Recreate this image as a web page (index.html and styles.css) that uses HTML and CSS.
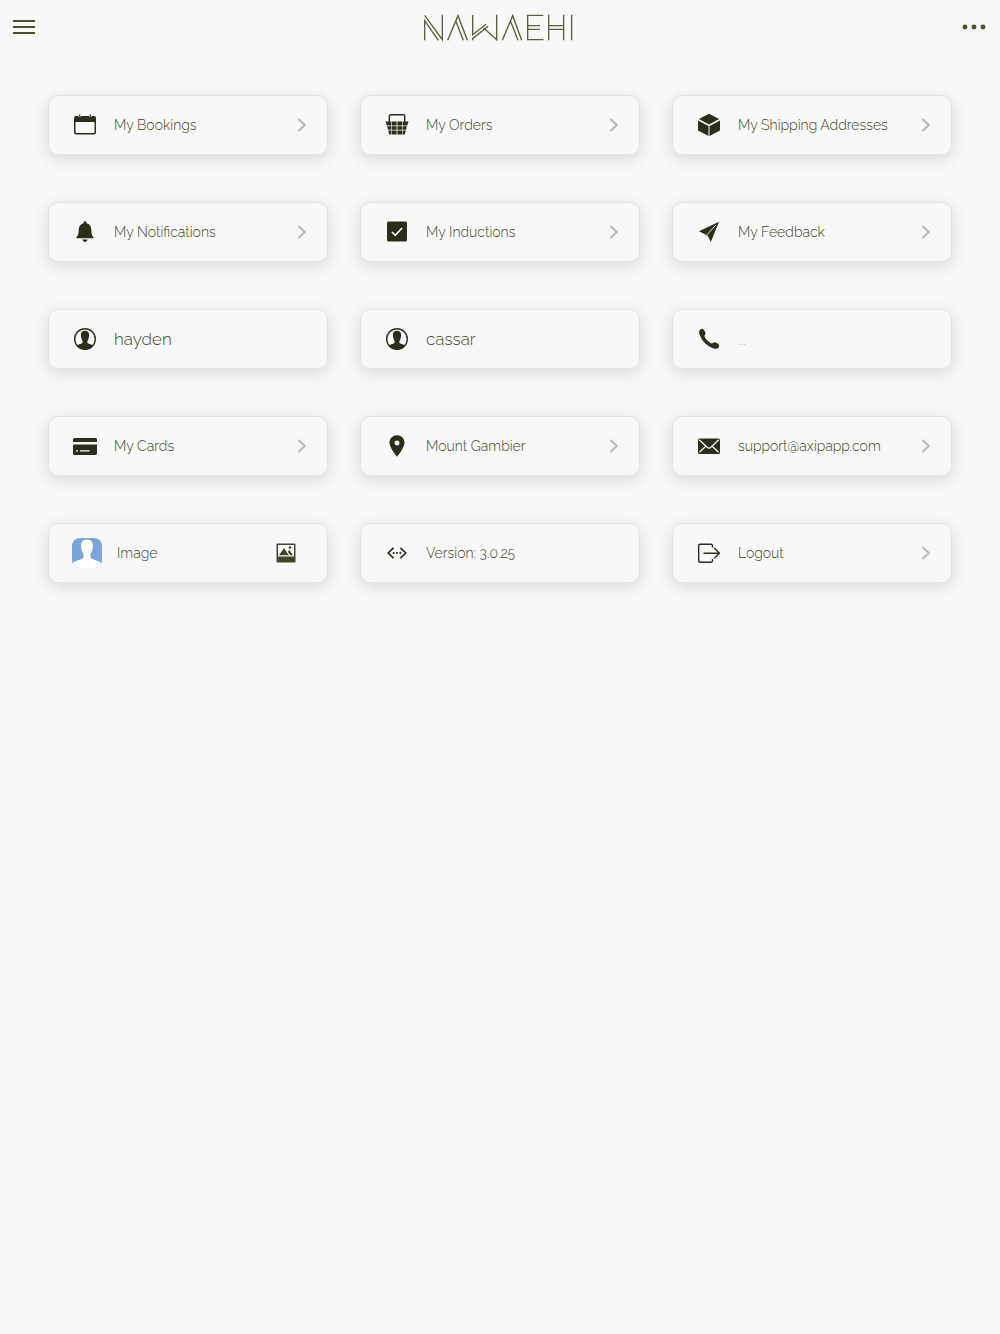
FILE: index.html
```html
<!DOCTYPE html>
<html lang="en">
<head>
  <meta charset="UTF-8">
  <meta name="viewport" content="width=device-width, initial-scale=1">
  <title>Nawaehi - My Account</title>
  <link rel="stylesheet" href="styles.css">
</head>
<body>
  <!-- shared icons -->
  <svg class="defs" aria-hidden="true">
    <symbol id="chevron" viewBox="0 0 10 16">
      <path d="M2 2.500l5.800 5.500L2 13.500" fill="none" stroke="#b9b9b9" stroke-width="2" stroke-linecap="round" stroke-linejoin="round"/>
    </symbol>
    <symbol id="person" viewBox="0 0 24 24">
      <circle cx="12" cy="12" r="10.300" fill="none" stroke="#2b2f1a" stroke-width="1.400"/>
      <path d="M12 3.800c-2.800 0-4.300 1.800-4.100 4.300.1 1.800.5 4.200 1.500 5.700.5.800.3 2-.2 2.500-1.200 1-3.900 1.100-5.200 2.300A10.400 10.400 0 0 0 12 22.500a10.400 10.400 0 0 0 8-3.900c-1.300-1.200-4-1.300-5.200-2.300-.5-.5-.7-1.700-.2-2.500 1-1.500 1.400-3.900 1.500-5.700.2-2.500-1.300-4.300-4.100-4.300z"/>
    </symbol>
  </svg>

  <header>
    <button class="icon-btn" aria-label="Menu">
      <svg width="24" height="24" viewBox="0 0 24 24"><path d="M1 6h22M1 12h22M1 18h22" stroke="#4a5030" stroke-width="2"/></svg>
    </button>
    <svg class="logo" viewBox="69 36 456 90" role="img" aria-label="Nawaehi">
      <path d="M74 121V62L115 121M74 46L127 119V44"/>
      <path d="M143 121L174 47L202 121M167 62L190 121"/>
      <path d="M218 45V104L258 73M218 121V116L264 79M250 83L290 119V44"/>
      <path d="M307 121L338 47L365 121M331 62L354 121"/>
      <path d="M430 46H383V119H430M383 77H420M383 88H420"/>
      <path d="M446 44V121M491 44V121M446 77H491M446 88H491"/>
      <path d="M515 44V121"/>
    </svg>
    <button class="icon-btn" aria-label="More">
      <svg width="24" height="24" viewBox="0 0 24 24" fill="#4a5030"><circle cx="3" cy="12" r="2.400"/><circle cx="12" cy="12" r="2.400"/><circle cx="21" cy="12" r="2.400"/></svg>
    </button>
  </header>

  <main>
    <a class="card" href="#bookings">
      <svg class="icon" viewBox="0 0 24 24"><path fill-rule="evenodd" d="M3 3h2.200a1.400 1.400 0 0 0 2.700 0h8.200a1.400 1.400 0 0 0 2.700 0H21a2 2 0 0 1 2 2v14.500a2 2 0 0 1-2 2H3a2 2 0 0 1-2-2V5a2 2 0 0 1 2-2zm-.5 6v10a1 1 0 0 0 1 1h17a1 1 0 0 0 1-1V9z"/><path d="M5.900 1.500h1.300v2H5.900zM16.800 1.500h1.300v2h-1.300z"/></svg>
      <span>My Bookings</span>
      <svg class="chevron"><use href="#chevron"/></svg>
    </a>

    <a class="card" href="#orders">
      <svg class="icon" viewBox="0 0 24 24"><path fill="none" stroke="#2b2f1a" stroke-width="1.400" d="M4.300 9V3a1.200 1.200 0 0 1 1.200-1.200h13A1.200 1.200 0 0 1 19.700 3v6"/><path d="M.5 8.500H6v4H1.700zM6.600 8.500h5v4h-5zM12.400 8.500h5v4h-5zM18 8.500h5.500l-1.200 4H18zM2.200 13.300H6v3.500H3zM6.600 13.300h5v3.500h-5zM12.400 13.300h5v3.500h-5zM18 13.300h3.800l-.8 3.500h-3zM3.200 17.600H6v4H4.200zM6.600 17.600h5v4h-5zM12.400 17.600h5v4h-5zM18 17.600h2.800l-1 4H18z"/></svg>
      <span>My Orders</span>
      <svg class="chevron"><use href="#chevron"/></svg>
    </a>

    <a class="card" href="#addresses">
      <svg class="icon" viewBox="0 0 24 24"><path d="M12 .8l10.200 5.300L12 11.500 1.800 6.100zM1 7.600l10.500 5.500v10L1 17.600zM23 7.600l-10.500 5.500v10L23 17.600z"/></svg>
      <span>My Shipping Addresses</span>
      <svg class="chevron"><use href="#chevron"/></svg>
    </a>

    <a class="card" href="#notifications">
      <svg class="icon" viewBox="0 0 24 24"><path d="M12 1.300c.9 0 1.500.6 1.500 1.500v.4c2.900.7 4.700 3.100 4.800 6.300.1 4.300.4 6 2.100 7.400.5.400.2 1.300-.5 1.300H4.100c-.7 0-1-.9-.5-1.300 1.700-1.400 2-3.100 2.100-7.400.1-3.200 1.900-5.600 4.800-6.300v-.4c0-.9.6-1.500 1.500-1.500zM9.500 19.500h5c-.2 1.500-1.200 2.500-2.500 2.500s-2.300-1-2.500-2.500z"/></svg>
      <span>My Notifications</span>
      <svg class="chevron"><use href="#chevron"/></svg>
    </a>

    <a class="card" href="#inductions">
      <svg class="icon" viewBox="0 0 24 24"><rect x="2" y="1.500" width="20" height="20" rx="1.500"/><path d="M7 12l3.300 3.300L17 8" fill="none" stroke="#f8f8f8" stroke-width="1.700"/></svg>
      <span>My Inductions</span>
      <svg class="chevron"><use href="#chevron"/></svg>
    </a>

    <a class="card" href="#feedback">
      <svg class="icon" viewBox="0 0 24 24"><path d="M22 1.800L2 11.300l6.500 3.200zM22 1.800L9.300 15.800l1.300-.6L13.800 22zM8.500 14.500l.8 2.300L22 1.800z"/><path d="M8.600 16.200L18.600 5.300" stroke="#f8f8f8" stroke-width=".9"/></svg>
      <span>My Feedback</span>
      <svg class="chevron"><use href="#chevron"/></svg>
    </a>

    <label class="card">
      <svg class="icon"><use href="#person"/></svg>
      <input type="text" value="hayden" aria-label="First name">
    </label>

    <label class="card">
      <svg class="icon"><use href="#person"/></svg>
      <input type="text" value="cassar" aria-label="Last name">
    </label>

    <label class="card">
      <svg class="icon" viewBox="0 0 24 24"><path d="M3.300 2.500c1-.8 2.300-.9 3.200 0 1.100 1.100 1.900 2.600 2 3.900.1 1.200-1.300 1.700-1.100 2.700.4 2.300 4.700 6.600 7.300 7.300 1 .2 1.600-1.300 2.900-1.200 1.300.1 2.900 1 4 2.100.8.900.7 2.200-.1 3.200-1.200 1.400-3.200 1.600-5.300.7C9.600 18.800 5 14.100 2.600 7.800 1.800 5.700 1.900 3.700 3.300 2.500z"/></svg>
      <input type="tel" placeholder="..." aria-label="Phone">
    </label>

    <a class="card" href="#cards">
      <svg class="icon" viewBox="0 0 24 24"><path fill-rule="evenodd" d="M1.800 4h20.400C23.300 4 24 4.700 24 5.700V8H0V5.700C0 4.700.7 4 1.800 4zM0 10.400h24v8.800c0 1-.7 1.800-1.800 1.800H1.800C.7 21 0 20.200 0 19.200zM3 16.300v1.300h2v-1.300zm4 0v1.300h9.500v-1.300z"/></svg>
      <span>My Cards</span>
      <svg class="chevron"><use href="#chevron"/></svg>
    </a>

    <a class="card" href="#location">
      <svg class="icon" viewBox="0 0 24 24"><path fill-rule="evenodd" d="M12 1.300c-4.200 0-7.500 3.200-7.500 7.300 0 5.500 7.500 14.200 7.500 14.200s7.500-8.700 7.500-14.200c0-4.100-3.300-7.300-7.500-7.300zm0 5.200a2.500 2.500 0 1 1 0 5 2.500 2.500 0 0 1 0-5z"/></svg>
      <span>Mount Gambier</span>
      <svg class="chevron"><use href="#chevron"/></svg>
    </a>

    <a class="card" href="mailto:support@axipapp.com">
      <svg class="icon" viewBox="0 0 24 24"><rect x="1" y="4.500" width="22" height="15.500" rx="1.500"/><path d="M2.200 5.800l8 7.500c1 .9 2.600.9 3.600 0l8-7.500M2.500 18.300l6-5.800M21.500 18.300l-6-5.800" fill="none" stroke="#f8f8f8" stroke-width="1.200"/></svg>
      <span>support@axipapp.com</span>
      <svg class="chevron"><use href="#chevron"/></svg>
    </a>

    <div class="card card-image">
      <svg class="avatar" viewBox="0 0 30 30"><rect width="30" height="30" fill="#7ba4d9"/><path fill="#fff" d="M15 1.500c-4 0-6.200 2.800-5.900 6.500.2 2.900.8 5.700 2.200 7.800.6 1.200.5 3.400-.2 4.200C9 22.200 3.500 22.300 0 25.500V30h30v-4.500c-3.500-3.200-9-3.300-11.100-5.500-.7-.8-.8-3-.2-4.200 1.400-2.100 2-4.900 2.200-7.800.3-3.700-1.900-6.500-5.900-6.500z"/></svg>
      <span>Image</span>
      <button class="icon-btn" aria-label="Choose image">
        <svg width="20" height="20" viewBox="0 0 20 20" fill="#41472a"><path fill-rule="evenodd" d="M1.500.5h17a1 1 0 0 1 1 1v17a1 1 0 0 1-1 1h-17a1 1 0 0 1-1-1v-17a1 1 0 0 1 1-1zM2 2v11.500h16V2z"/><path d="M3 12.300L8 5l4.800 7.300zM11.800 8.800L13.500 7l3.500 5.300h-2.800z"/><circle cx="14" cy="4.500" r="1.300"/></svg>
      </button>
    </div>

    <div class="card">
      <svg class="icon" viewBox="0 0 24 24"><path d="M8.500 6.800L3.200 12l5.300 5.200M15.500 6.800l5.300 5.200-5.300 5.200" fill="none" stroke="#2b2f1a" stroke-width="1.700"/><circle cx="8.600" cy="12" r="1.100"/><circle cx="12" cy="12" r="1.100"/><circle cx="15.400" cy="12" r="1.100"/></svg>
      <span>Version: 3.0.25</span>
    </div>

    <a class="card" href="#logout">
      <svg class="icon" viewBox="0 0 24 24"><path d="M15.500 6V4.800a1.500 1.500 0 0 0-1.500-1.500H3.200a1.500 1.500 0 0 0-1.500 1.500v14.900a1.500 1.500 0 0 0 1.500 1.500H14a1.500 1.500 0 0 0 1.500-1.500v-1.200M7 12.200h15.500M17.500 7.300l5 4.900-5 4.900" fill="none" stroke="#2b2f1a" stroke-width="1.400" stroke-linecap="round" stroke-linejoin="round"/></svg>
      <span>Logout</span>
      <svg class="chevron"><use href="#chevron"/></svg>
    </a>
  </main>
</body>
</html>
```
FILE: styles.css
```css
* {
  box-sizing: border-box;
}

body {
  margin: 0;
  font-family: Raleway, Lato, sans-serif;
  font-size: 14px;
  font-weight: 300;
  background-color: #f8f8f8;
  color: #3f4526;
}

.defs {
  display: none;
}

header {
  display: flex;
  align-items: center;
  justify-content: space-between;
  height: 54px;
  padding: 0 14px 0 12px;
}

.logo {
  width: 152px;
  height: 30px;
  fill: none;
  stroke: #5b6038;
  stroke-width: 4;
}

.icon-btn {
  display: flex;
  padding: 0;
  border: none;
  background: none;
  cursor: pointer;
}

main {
  display: grid;
  grid-template-columns: repeat(3, minmax(0, 1fr));
  gap: 47px 32px;
  padding: 41px 48px;
}

.card {
  display: flex;
  align-items: center;
  gap: 17px;
  height: 60px;
  padding: 0 20px 0 24px;
  border: 1px solid #e4e4e4;
  border-radius: 10px;
  background-color: #f8f8f8;
  box-shadow: 0 4px 16px rgba(0, 0, 0, 0.12);
  color: inherit;
  text-decoration: none;
}

.card span {
  flex: 1;
  white-space: nowrap;
}

.icon {
  flex: none;
  width: 24px;
  height: 24px;
  fill: #2b2f1a;
}

.chevron {
  flex: none;
  width: 10px;
  height: 16px;
}

.card input {
  flex: 1;
  min-width: 0;
  padding: 0;
  border: none;
  outline: none;
  background: none;
  font-family: inherit;
  font-size: 17px;
  font-weight: inherit;
  color: inherit;
}

.card input::placeholder {
  font-size: 14px;
  color: #a4a696;
}

.card-image {
  gap: 15px;
  padding: 0 31px 0 23px;
}

.avatar {
  width: 30px;
  height: 30px;
  border-radius: 8px;
}
```
